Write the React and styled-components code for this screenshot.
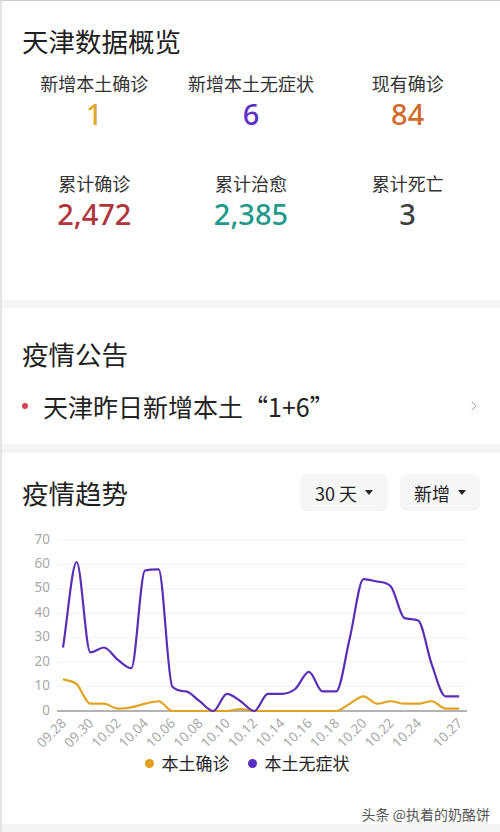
import React from "react";
import styled, { createGlobalStyle } from "styled-components";
import { ChevronRight } from "lucide-react";

const GlobalStyle = createGlobalStyle`
  body {
    margin: 0;
    background: #ffffff;
    font-family: "Noto Sans CJK SC", "Noto Sans", sans-serif;
  }
`;

const Page = styled.div`
  width: 500px;
  box-sizing: border-box;
  border-top: 1px solid #c9c9c9;
  border-left: 2px solid #e4e4e4;
  background: #f4f4f4;
`;

const Card = styled.section`
  background: #ffffff;
  padding: ${(p) => p.pad};
  margin-bottom: ${(p) => p.gap || 0}px;
`;

const CardTitle = styled.h2`
  margin: 0;
  padding-left: 20px;
  font-size: 26.5px;
  line-height: 31px;
  font-weight: 400;
  color: #1f1f1f;
`;

const StatGrid = styled.div`
  display: grid;
  grid-template-columns: repeat(3, 1fr);
  row-gap: 40px;
  padding: 0 14px 0 14px;
  margin-top: 15px;
`;

const Stat = styled.div`
  display: flex;
  flex-direction: column;
  align-items: center;
  gap: 2px;
`;

const StatLabel = styled.div`
  font-size: 18px;
  line-height: 24px;
  color: #333;
`;

const StatValue = styled.div`
  font-family: "Noto Sans", "Open Sans", sans-serif;
  font-size: 29px;
  line-height: 34px;
  font-weight: 500;
  color: ${(p) => p.color};
`;

const Notice = styled.div`
  display: flex;
  align-items: center;
  margin-top: 20px;
  padding: 0 18px 0 20px;
`;

const Dot = styled.span`
  width: ${(p) => p.size || 6}px;
  height: ${(p) => p.size || 6}px;
  border-radius: 50%;
  background: ${(p) => p.color};
  flex-shrink: 0;
`;

const NoticeText = styled.div`
  flex: 1;
  margin-left: 15px;
  font-size: 25px;
  line-height: 34px;
  color: #222;
`;

const TrendHead = styled.div`
  display: flex;
  align-items: center;
  padding-right: 20px;
`;

const Grow = styled.div`
  flex: 1;
`;

const Select = styled.button`
  display: flex;
  align-items: center;
  justify-content: center;
  gap: 8px;
  width: ${(p) => p.w}px;
  height: 37px;
  margin-left: 12px;
  border: none;
  border-radius: 7px;
  background: #f6f6f6;
  font-family: "Noto Sans CJK SC", "Noto Sans", sans-serif;
  font-size: 18px;
  color: #222;
  padding: 0;
`;

const Caret = styled.span`
  width: 0;
  height: 0;
  border-left: 4px solid transparent;
  border-right: 4px solid transparent;
  border-top: 5px solid #222;
`;

const Chart = styled.svg`
  display: block;
  margin-top: 15px;
  overflow: visible;
`;

const Legend = styled.div`
  display: flex;
  justify-content: center;
  align-items: center;
  padding-right: 8px;
`;

const LegendItem = styled.div`
  display: flex;
  align-items: center;
  gap: 8px;
  margin: 0 9px;
  font-size: 17px;
  line-height: 22px;
  color: #222;
`;

const Watermark = styled.div`
  margin-top: 30px;
  padding-right: 10px;
  text-align: right;
  font-size: 14px;
  line-height: 20px;
  color: #555;
`;

const BottomBand = styled.div`
  height: 9px;
`;

const confirmed = [13, 11, 3, 3, 1, 1.5, 3, 4, 0, 0, 0, 0, 0, 0.8, 0, 0, 0, 0, 0, 0, 0, 3, 6, 3, 4, 3, 3, 4, 1, 1];
const asymptomatic = [26, 61, 24, 26, 21, 17.5, 57.5, 58, 10, 8, 4, 0, 7, 4, 0, 7, 7, 9, 16, 8, 8, 30, 54, 53, 51, 38, 37, 19, 6, 6];

const days = [
  "09.28", "09.29", "09.30", "10.01", "10.02", "10.03", "10.04", "10.05", "10.06", "10.07",
  "10.08", "10.09", "10.10", "10.11", "10.12", "10.13", "10.14", "10.15", "10.16", "10.17",
  "10.18", "10.19", "10.20", "10.21", "10.22", "10.23", "10.24", "10.25", "10.26", "10.27",
];

const toX = (i) => 61 + i * 13.66;
const toY = (v) => 185 - v * 2.443;

// monotone cubic so the curve never dips below zero
function smoothPath(values) {
  const pts = values.map((v, i) => [toX(i), toY(v)]);
  const n = pts.length;
  const d = [];
  for (let i = 0; i < n - 1; i++) {
    d.push((pts[i + 1][1] - pts[i][1]) / (pts[i + 1][0] - pts[i][0]));
  }
  const m = [d[0]];
  for (let i = 1; i < n - 1; i++) {
    m.push(d[i - 1] * d[i] <= 0 ? 0 : (d[i - 1] + d[i]) / 2);
  }
  m.push(d[n - 2]);
  for (let i = 0; i < n - 1; i++) {
    if (d[i] === 0) {
      m[i] = 0;
      m[i + 1] = 0;
      continue;
    }
    const a = m[i] / d[i];
    const b = m[i + 1] / d[i];
    const s = a * a + b * b;
    if (s > 9) {
      const t = 3 / Math.sqrt(s);
      m[i] = t * a * d[i];
      m[i + 1] = t * b * d[i];
    }
  }
  let path = `M${pts[0][0]},${pts[0][1]}`;
  for (let i = 0; i < n - 1; i++) {
    const h = (pts[i + 1][0] - pts[i][0]) / 3;
    path += ` C${pts[i][0] + h},${pts[i][1] + m[i] * h} ${pts[i + 1][0] - h},${pts[i + 1][1] - m[i + 1] * h} ${pts[i + 1][0]},${pts[i + 1][1]}`;
  }
  return path;
}

const TrendChart = () => {
  const ticks = [0, 10, 20, 30, 40, 50, 60, 70];
  const shown = days.map((d, i) => i).filter((i) => (i % 2 === 0 && i <= 26) || i === 29);
  return (
    <Chart width="498" height="226" viewBox="0 0 498 226">
      {ticks.map((t) => (
        <g key={t}>
          <line
            x1="55"
            x2="465"
            y1={toY(t)}
            y2={toY(t)}
            stroke={t === 0 ? "#9a9a9a" : "#f1f1f1"}
            strokeWidth={t === 0 ? 1.6 : 1}
          />
          <text
            x="48"
            y={toY(t)}
            textAnchor="end"
            dominantBaseline="middle"
            fontSize="13.5"
            fill="#a8a8a8"
            fontFamily="Noto Sans, sans-serif"
          >
            {t}
          </text>
        </g>
      ))}
      {shown.map((i) => (
        <text
          key={i}
          x={toX(i) + 4}
          y="198"
          textAnchor="end"
          fontSize="13.5"
          fill="#a8a8a8"
          fontFamily="Noto Sans, sans-serif"
          transform={`rotate(-45 ${toX(i) + 4} 198)`}
        >
          {days[i]}
        </text>
      ))}
      <path d={smoothPath(confirmed)} fill="none" stroke="#e1a31f" strokeWidth="2.2" />
      <path d={smoothPath(asymptomatic)} fill="none" stroke="#5a2fb6" strokeWidth="2.2" />
    </Chart>
  );
};

const App = () => {
  return (
    <>
      <GlobalStyle />
      <Page>
        <Card pad="24px 0 69px" gap={8}>
          <CardTitle>天津数据概览</CardTitle>
          <StatGrid>
            <Stat>
              <StatLabel>新增本土确诊</StatLabel>
              <StatValue color="#e0a82e">1</StatValue>
            </Stat>
            <Stat>
              <StatLabel>新增本土无症状</StatLabel>
              <StatValue color="#5b30c6">6</StatValue>
            </Stat>
            <Stat>
              <StatLabel>现有确诊</StatLabel>
              <StatValue color="#d2692a">84</StatValue>
            </Stat>
            <Stat>
              <StatLabel>累计确诊</StatLabel>
              <StatValue color="#b1363b">2,472</StatValue>
            </Stat>
            <Stat>
              <StatLabel>累计治愈</StatLabel>
              <StatValue color="#1f9a8b">2,385</StatValue>
            </Stat>
            <Stat>
              <StatLabel>累计死亡</StatLabel>
              <StatValue color="#404040">3</StatValue>
            </Stat>
          </StatGrid>
        </Card>

        <Card pad="30px 0 21px" gap={9}>
          <CardTitle>疫情公告</CardTitle>
          <Notice>
            <Dot color="#d8434f" />
            <NoticeText>天津昨日新增本土“1+6”</NoticeText>
            <ChevronRight size={16} color="#a0a0a0" strokeWidth={1.5} />
          </Notice>
        </Card>

        <Card pad="21px 0 0">
          <TrendHead>
            <CardTitle>疫情趋势</CardTitle>
            <Grow />
            <Select w={88}>
              30 天 <Caret />
            </Select>
            <Select w={80}>
              新增 <Caret />
            </Select>
          </TrendHead>
          <TrendChart />
          <Legend>
            <LegendItem>
              <Dot size={9} color="#e3a01d" />
              本土确诊
            </LegendItem>
            <LegendItem>
              <Dot size={9} color="#5a2fc4" />
              本土无症状
            </LegendItem>
          </Legend>
          <Watermark>头条 @执着的奶酪饼</Watermark>
        </Card>
        <BottomBand />
      </Page>
    </>
  );
};

export default App;
